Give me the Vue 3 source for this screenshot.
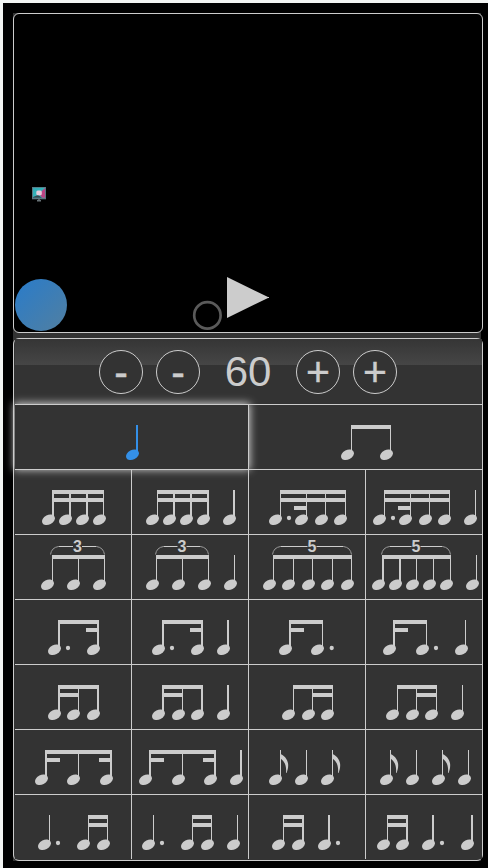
<script setup>
// Note: [left edge of the head, x of the stem, stem width, flag?]
// Beam: [x1, x2, level], Dot: x centre, Tuplet: [x1, x2, label]
const W = 117

const wide = [
  { x: 15, w: 233, active: true, notes: [[126, 136, 2]] },
  { x: 249, w: 233, notes: [[341, 351, 1], [380, 390, 1]], beams: [[351, 391, 0]] },
]

const patterns = [
  { notes: [[42, 52, 2], [59, 69, 2], [76, 86, 2], [93, 103, 1]], beams: [[52, 104, 0], [52, 104, 1]] },
  { notes: [[146, 157, 1], [163, 173, 2], [180, 190, 2], [197, 207, 2], [223, 233, 2]], beams: [[157, 209, 0], [157, 209, 1]] },
  { notes: [[269, 280, 1], [295, 306, 1], [315, 325, 1], [334, 345, 1]], beams: [[280, 346, 0], [280, 346, 1], [294, 306, 2]], dots: [289] },
  { notes: [[373, 384, 1], [399, 410, 1], [419, 429, 1], [438, 449, 1], [464, 475, 1]], beams: [[384, 450, 0], [384, 450, 1], [398, 410, 2]], dots: [393] },

  { notes: [[41, 52, 1], [67, 78, 1], [93, 104, 1]], beams: [[52, 105, 0]], tuplet: [50.5, 104.5, '3'] },
  { notes: [[146, 156, 1], [172, 182, 1], [198, 208, 1], [224, 234, 1]], beams: [[156, 209, 0]], tuplet: [155.5, 208.5, '3'] },
  { notes: [[263, 273, 1], [282, 293, 1], [302, 312, 1], [321, 332, 1], [341, 351, 1]], beams: [[273, 352, 0]], tuplet: [272.5, 351.5, '5'] },
  { notes: [[372, 382, 2], [389, 399, 2], [406, 416, 1], [423, 433, 1], [440, 450, 1], [466, 476, 1]], beams: [[382, 451, 0]], tuplet: [381.5, 450.5, '5'] },

  { notes: [[48, 58, 2], [87, 97, 2]], beams: [[58, 99, 0], [86, 97, 1]], dots: [68] },
  { notes: [[152, 162, 2], [191, 201, 2], [217, 227, 2]], beams: [[162, 203, 0], [190, 201, 1]], dots: [172] },
  { notes: [[279, 289, 2], [311, 322, 1]], beams: [[289, 323, 0], [289, 304, 1]], dots: [331.7] },
  { notes: [[383, 393, 2], [416, 426, 1], [455, 465, 1]], beams: [[393, 427, 0], [393, 408, 1]], dots: [436] },

  { notes: [[48, 58, 2], [67, 78, 1], [87, 97, 2]], beams: [[58, 99, 0], [58, 79, 1]] },
  { notes: [[152, 162, 2], [172, 182, 1], [191, 201, 2], [217, 227, 2]], beams: [[162, 203, 0], [162, 183, 1]] },
  { notes: [[282, 293, 1], [302, 312, 1], [321, 332, 1]], beams: [[293, 333, 0], [312, 333, 1]] },
  { notes: [[386, 397, 1], [406, 416, 1], [425, 436, 1], [451, 462, 1]], beams: [[397, 437, 0], [416, 437, 1]] },

  { notes: [[35, 45, 2], [67, 78, 1], [100, 110, 2]], beams: [[45, 112, 0], [45, 60, 1], [99, 110, 1]] },
  { notes: [[139, 149, 2], [172, 182, 1], [204, 214, 2], [230, 240, 2]], beams: [[149, 216, 0], [149, 164, 1], [203, 214, 1]] },
  { notes: [[269, 280, 1, true], [295, 306, 1], [321, 332, 1, true]] },
  { notes: [[380, 390, 1, true], [406, 416, 1], [432, 442, 1, true], [458, 468, 1]] },

  { notes: [[38, 49, 1], [77, 88, 1], [97, 107, 1]], beams: [[88, 108, 0], [88, 108, 1]], dots: [58] },
  { notes: [[142, 153, 1], [181, 192, 1], [201, 211, 1], [227, 237, 1]], beams: [[192, 212, 0], [192, 212, 1]], dots: [162] },
  { notes: [[272, 283, 1], [292, 302, 2], [318, 328, 2]], beams: [[283, 304, 0], [283, 304, 1]], dots: [338] },
  { notes: [[377, 387, 1], [396, 406, 2], [422, 432, 2], [461, 471, 2]], beams: [[387, 408, 0], [387, 408, 1]], dots: [442] },
].map((p, i) => ({ ...p, x: 15 + (i % 4) * W, w: 116 }))

const cells = [...wide, ...patterns]

const head = (x) => `translate(${x + 6.5} 50.8) rotate(-27)`
const mid = (t) => (t[0] + t[1]) / 2
const bracket = ([a, b]) => {
  const m = (a + b) / 2
  return `M${a + 8} 12.5H${m - 4.5}M${m + 4.5} 12.5H${b - 8}`
}
const hooks = ([a, b]) => `M${a} 20.5Q${a + 1} 13.5 ${a + 8} 12.5M${b} 20.5Q${b - 1} 13.5 ${b - 8} 12.5`
</script>

<template>
  <div class="page">
    <main class="app">
      <section class="stage">
        <svg width="468" height="318" viewBox="14 14 468 318">
          <defs>
            <linearGradient id="ball" x1="0" y1="0" x2="1" y2="1">
              <stop offset="0.1" stop-color="#2d7cc6" />
              <stop offset="0.95" stop-color="#4f7fa3" />
            </linearGradient>
            <linearGradient id="screen" x1="0" y1="0" x2="1" y2="1">
              <stop offset="0" stop-color="#2fa9b5" />
              <stop offset="1" stop-color="#3cc0c0" />
            </linearGradient>
          </defs>
          <rect x="32" y="187" width="14" height="12.3" fill="#5b7580" />
          <rect x="33" y="187.8" width="12" height="10" fill="url(#screen)" />
          <path d="M45 188L39 193.5L42 197.8H45Z" fill="#b94484" />
          <path d="M33 197.8V197L38 195L42 197.8Z" fill="#354650" />
          <rect x="36.3" y="190.5" width="5.5" height="4.8" rx="1.5" fill="#e6cbdc" />
          <path d="M38 199.3H40V200H41V201.5H37V200H38Z" fill="#687276" />
          <circle cx="41" cy="305" r="26" fill="url(#ball)" />
          <circle cx="207.4" cy="315.4" r="13.2" fill="none" stroke="#5a5a5a" stroke-width="2.7" />
          <path d="M227 277L268 297H269V298H268L227 318Z" fill="#ccc" />
        </svg>
      </section>

      <section class="panel">
        <header class="tempo">
          <button class="round">-</button>
          <button class="round">-</button>
          <span class="value">60</span>
          <button class="round">+</button>
          <button class="round">+</button>
        </header>
        <div class="grid">
          <div v-for="(c, i) in cells" :key="i" class="cell" :class="{ wide: i < 2, active: c.active }">
            <svg :width="c.w" height="64" :viewBox="`${c.x} 1 ${c.w} 64`">
              <g v-for="(n, k) in c.notes" :key="k">
                <ellipse rx="6.9" ry="4.7" :transform="head(n[0])" />
                <rect :x="n[1]" y="21" :width="n[2]" height="29" />
                <path v-if="n[3]" :transform="`translate(${n[1]} 0)`" d="M0.5 25C3.5 26 8 30 8.2 36C8.2 39 7.5 41.5 6.6 44L6 43.8C6.6 37.5 5 32.5 0.5 29.5Z" />
              </g>
              <rect v-for="(b, k) in c.beams" :key="'b' + k" :x="b[0]" :y="21 + b[2] * 8" :width="b[1] - b[0]" height="4" />
              <circle v-for="d in c.dots" :key="'d' + d" :cx="d" cy="49" r="2.15" />
              <template v-if="c.tuplet">
                <path class="line" :d="bracket(c.tuplet)" />
                <path class="line faint" :d="hooks(c.tuplet)" />
                <text :x="mid(c.tuplet)" y="18" text-anchor="middle">{{ c.tuplet[2] }}</text>
              </template>
            </svg>
          </div>
        </div>
      </section>
    </main>
  </div>
</template>

<style>
body {
  background: #000;
}
</style>

<style scoped>
.page {
  box-sizing: border-box;
  height: 868px;
  padding: 10px 0 0 10px;
  border-top: 3px solid #f2f5f3;
  border-left: 3px solid #f2f5f3;
  background: #000;
  overflow: hidden;
  font-family: "Liberation Sans", Arial, sans-serif;
  color: #ccc;
}
.app {
  display: flex;
  flex-direction: column;
  gap: 5px;
  width: 468px;
  background: #333;
}
.stage,
.panel {
  box-sizing: border-box;
  width: 470px;
  border: 1px solid #ccc;
  border-radius: 6px;
}
.stage {
  height: 320px;
  background: #000;
}
.panel {
  height: 523px;
  padding-left: 1px;
  background: #333;
}
svg {
  display: block;
}
.tempo {
  box-sizing: border-box;
  display: flex;
  justify-content: center;
  align-items: center;
  gap: 13px;
  height: 65px;
  padding: 1px 1px 0 0;
  background: linear-gradient(#353535, #464646) no-repeat 0 0 / 100% 26px;
  font-size: 42px;
}
.round {
  box-sizing: border-box;
  width: 44px;
  height: 44px;
  padding: 0;
  border: 1px solid #ccc;
  border-radius: 50%;
  background: #333;
  color: inherit;
  font: inherit;
  font-size: 41px;
  line-height: 42px;
  text-align: center;
  -webkit-text-stroke: 0.4px #ccc;
}
.value {
  width: 70px;
  text-align: center;
}
.grid {
  display: grid;
  grid-template-columns: 117px 117px 117px 116px;
  grid-auto-rows: 65px;
}
.cell {
  box-sizing: border-box;
  border-top: 1px solid #ccc;
  border-right: 1px solid #ccc;
  background: #333;
  fill: #ccc;
}
.wide {
  grid-column: span 2;
}
.wide:nth-child(2),
.cell:nth-child(4n + 2) {
  border-right: 0;
}
.active {
  position: relative;
  z-index: 1;
  fill: #3490e8;
  box-shadow: 0 0 8px 1px #ccc;
}
.line {
  fill: none;
  stroke: #ccc;
  stroke-width: 1;
}
.faint {
  stroke: #999;
}
text {
  font: bold 16px "Liberation Sans", Arial, sans-serif;
}
</style>
